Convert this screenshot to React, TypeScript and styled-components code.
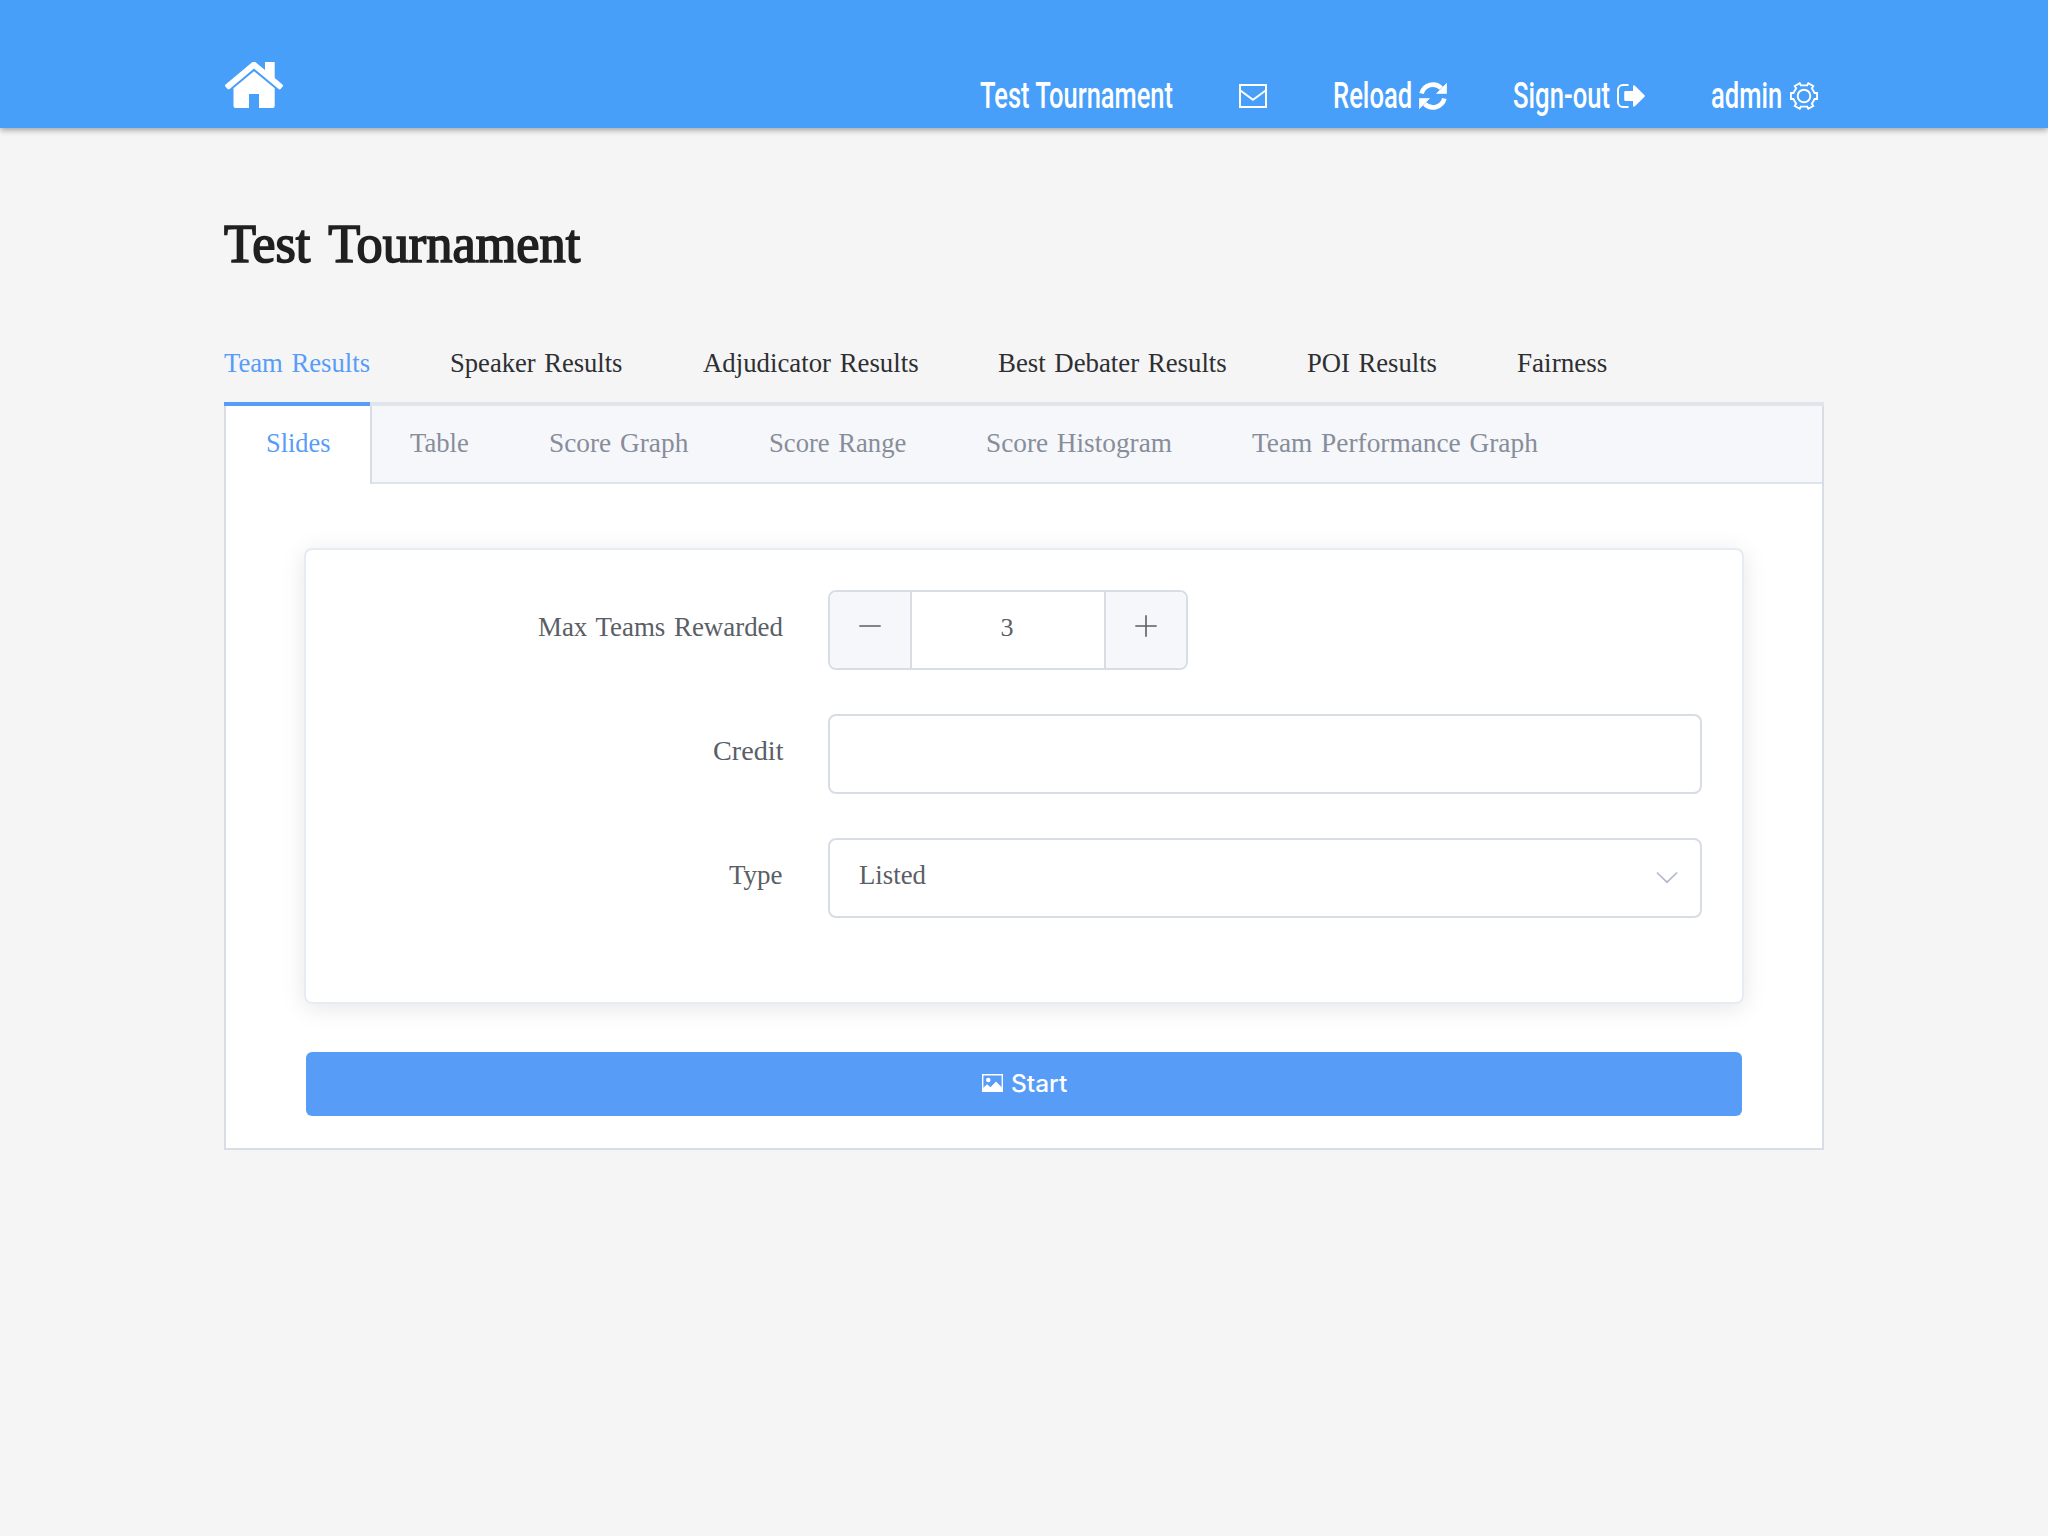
import React, { useLayoutEffect, useRef, useState } from 'react';
import styled, { createGlobalStyle, css } from 'styled-components';

const serif = `"Liberation Serif", "Times New Roman", serif`;
const condensed = `Roboto, "Liberation Sans", sans-serif`;
const line = '#d8dce5';
const primary = '#579df8';

const GlobalStyle = createGlobalStyle`
  * { box-sizing: border-box; }
  body { margin: 0; background: #f5f5f5; font-family: ${serif}; font-size: 28px; word-spacing: 2px; }
  button, input { font: inherit; }
`;

/* Text set to a fixed measure, condensed or expanded to fill it. */
const Measure = styled.span`
  display: inline-block;
  flex: none;
  white-space: nowrap;
  text-align: left;
`;
const Glyphs = styled.span`
  display: inline-block;
  transform-origin: 0 50%;
`;
function Fit({ width, children }: { width: number; children: string }) {
  const ref = useRef<HTMLSpanElement>(null);
  const [scale, setScale] = useState(1);
  useLayoutEffect(() => {
    if (ref.current) setScale(width / ref.current.offsetWidth);
  }, [width, children]);
  return (
    <Measure style={{ width }}>
      <Glyphs ref={ref} style={{ transform: `scaleX(${scale})` }}>{children}</Glyphs>
    </Measure>
  );
}

const Header = styled.header`
  height: 128px;
  padding: 0 224px;
  background: #489ff9;
  box-shadow: 0 2px 6px rgba(0, 0, 0, 0.36);
  display: flex;
  justify-content: space-between;
  color: #fff;
`;
const HomeLink = styled.a`
  padding: 62px 0 0 1px;
  svg { display: block; }
`;
const Nav = styled.nav`
  display: flex;
  padding: 70px 6px 0 0;
  gap: 66px;
`;
const NavItem = styled.a<{ $gap?: number }>`
  display: flex;
  align-items: center;
  height: 52px;
  gap: ${(p) => p.$gap ?? 8}px;
  font: 500 36px/51px ${condensed};
  word-spacing: 0;
  svg { display: block; flex: none; }
`;

const Main = styled.main`
  width: 1600px;
  margin: 0 auto;
`;
const Title = styled.h1`
  margin: 0;
  padding-top: 80px;
  height: 194px;
  font: 400 54.500px/72px ${serif};
  word-spacing: 6px;
  color: #202020;
  -webkit-text-stroke: 1.700px #202020;
`;
const PrimaryTabs = styled.div`
  display: flex;
  gap: 80px;
  height: 84px;
  border-bottom: 4px solid #dfe4ed;
`;
const PrimaryTab = styled.a<{ $active?: boolean }>`
  height: 84px;
  line-height: 81px;
  color: ${(p) => (p.$active ? primary : '#2d2f33')};
  ${(p) => p.$active && css`border-bottom: 4px solid ${primary};`}
`;
const Panel = styled.section`
  height: 744px;
  background: #fff;
  border: 2px solid ${line};
  border-top: 0;
`;
const SubTabs = styled.div`
  display: flex;
  height: 78px;
  background: #f5f7fb;
  border-bottom: 2px solid #dfe3ec;
`;
const SubTab = styled.a<{ $active?: boolean }>`
  height: 76px;
  padding: 0 40px;
  line-height: 74px;
  color: #878d99;
  ${(p) => p.$active && css`
    height: 78px;
    margin-right: -2px;
    color: ${primary};
    background: #fff;
    border-right: 2px solid ${line};
  `}
`;
const Body = styled.div`
  padding: 64px 78px 0;
`;
const Card = styled.div`
  height: 456px;
  padding: 40px;
  display: flex;
  flex-direction: column;
  gap: 44px;
  border: 2px solid #e6ebf5;
  border-radius: 8px;
  background: #fff;
  box-shadow: 0 4px 24px rgba(0, 0, 0, 0.1);
`;
const Field = styled.div`
  display: grid;
  grid-template-columns: 437px 874px;
  gap: 45px;
  height: 80px;
  color: #5a5e66;
`;
const Label = styled.label`
  text-align: right;
  line-height: 74px;
`;
const Control = styled.div`
  height: 80px;
  border: 2px solid ${line};
  border-radius: 8px;
  background: #fff;
`;
const Stepper = styled(Control)`
  display: grid;
  grid-template-columns: 82px 1fr 82px;
  width: 360px;
  overflow: hidden;
`;
const StepButton = styled.button<{ $side: 'left' | 'right' }>`
  border: 0;
  padding: 0 1px 8px 0;
  background: #f5f7fb;
  color: #5a5e66;
  display: flex;
  align-items: center;
  justify-content: center;
  border-${(p) => (p.$side === 'left' ? 'right' : 'left')}: 2px solid ${line};
`;
const StepValue = styled.div`
  padding-right: 2px;
  text-align: center;
  line-height: 71px;
  font-size: 26px;
`;
const Select = styled(Control)`
  display: flex;
  justify-content: space-between;
  padding: 0 22px 0 29px;
  line-height: 70px;
  svg { margin-top: 29px; }
`;
const StartButton = styled.button`
  display: flex;
  align-items: center;
  justify-content: center;
  gap: 8px;
  width: 1436px;
  height: 64px;
  margin: 48px 0 0 2px;
  padding: 0;
  border: 0;
  border-radius: 6px;
  background: ${primary};
  color: #fff;
  font: 500 24px/32px Inter, sans-serif;
  svg { margin-top: -2px; }
`;

const HomeIcon = () => (
  <svg width="58" height="46" viewBox="0 0 58 46" fill="#fff">
    <path d="M29 9.3 49.7 26.3V44a2 2 0 0 1-2 2H34V32H24v14H10.5a2 2 0 0 1-2-2V26.3Z" />
    <path d="M26.3.9a4 4 0 0 1 5.2 0L40 8V0h9.7v16l7.7 6.5c.7.6.8 1.3.3 1.9L55.6 27c-.6.6-1.3.6-2 .1L29 6.6 4.600 27c-.7.5-1.400.5-2-.1L.3 24.400c-.5-.6-.4-1.300.3-1.900Z" />
  </svg>
);
const MailIcon = () => (
  <svg width="28" height="24" viewBox="0 0 28 24" fill="none" stroke="#fff" strokeWidth="2">
    <path d="M1 1h26v22H1ZM1 6.300l13 9.400 13-9.400" />
  </svg>
);
const ReloadIcon = () => (
  <svg width="28" height="28" viewBox="0 0 28 28">
    <path d="M2.600 11.500A11.700 11.700 0 0 1 22.300 6.200M25.400 16.500A11.700 11.700 0 0 1 5.700 21.800" fill="none" stroke="#fff" strokeWidth="4.600" />
    <path d="M27.700 1.300v10.200H17.500ZM.3 26.700V16.500H10.500Z" fill="#fff" stroke="#fff" strokeWidth=".6" strokeLinejoin="round" />
  </svg>
);
const SignOutIcon = () => (
  <svg width="28" height="24" viewBox="0 0 28 24">
    <path d="M11.500 1H6a5 5 0 0 0-5 5v12a5 5 0 0 0 5 5h5.500" fill="none" stroke="#fff" strokeWidth="2" />
    <path d="M8.500 7H16V2.500c0-1.300 1-1.600 1.900-.8l9.400 9.200a1.500 1.500 0 0 1 0 2.200l-9.400 9.200c-.9.800-1.900.5-1.900-.8V17H8.500a1.300 1.300 0 0 1-1.300-1.300V8.300A1.300 1.300 0 0 1 8.500 7Z" fill="#fff" />
  </svg>
);
const GearIcon = () => (
  <svg width="28" height="28" viewBox="0 0 28 28" fill="none" stroke="#fff" strokeWidth="1.900">
    <circle cx="14" cy="14" r="6.300" />
    <path d="M9.700 1.200 10.800 3.400h6.400l1.100-2.200 4.900 2.800-1.300 2.300 2.700 4.700h2.500v6h-2.500l-2.700 4.700 1.300 2.300-4.900 2.800-1.100-2.200h-6.400l-1.100 2.200-4.900-2.800 1.300-2.300L3.400 17H.9v-6h2.500l2.700-4.700L4.800 4Z" />
  </svg>
);
const StepIcon = ({ plus }: { plus?: boolean }) => (
  <svg width="22" height="22" viewBox="0 0 22 22" fill="none" stroke="currentColor" strokeWidth="1.600">
    <path d={plus ? 'M.3 11h21.400M11 .3v21.400' : 'M.3 11h21.400'} />
  </svg>
);
const ChevronIcon = () => (
  <svg width="22" height="16" viewBox="0 0 22 16" fill="none" stroke="#b4bccc" strokeWidth="1.700">
    <path d="M.9 3.500 11 13.200 21.100 3.500" />
  </svg>
);
const PictureIcon = () => (
  <svg width="21" height="18" viewBox="0 0 21 18">
    <path d="M.700.700h19.600v16.600H.700Z" fill="none" stroke="#fff" strokeWidth="1.400" />
    <circle cx="6.300" cy="6" r="2.300" fill="#fff" />
    <path d="M1 17v-3l4-3.800 3.500 3L14 7.500l6 6V17Z" fill="#fff" />
  </svg>
);

const primaryTabs: [string, number][] = [
  ['Team Results', 145.8],
  ['Speaker Results', 172.8],
  ['Adjudicator Results', 215.4],
  ['Best Debater Results', 228.9],
  ['POI Results', 130.3],
  ['Fairness', 90],
];
const subTabs: [string, number][] = [
  ['Slides', 64],
  ['Table', 59],
  ['Score Graph', 139.6],
  ['Score Range', 137],
  ['Score Histogram', 186],
  ['Team Performance Graph', 286],
];

export default function App() {
  return (
    <>
      <GlobalStyle />
      <Header>
        <HomeLink><HomeIcon /></HomeLink>
        <Nav>
          <NavItem><Fit width={193}>Test Tournament</Fit></NavItem>
          <NavItem><MailIcon /></NavItem>
          <NavItem $gap={7}><Fit width={79}>Reload</Fit><ReloadIcon /></NavItem>
          <NavItem $gap={7}><Fit width={97}>Sign-out</Fit><SignOutIcon /></NavItem>
          <NavItem $gap={8}><Fit width={71}>admin</Fit><GearIcon /></NavItem>
        </Nav>
      </Header>
      <Main>
        <Title><Fit width={356}>Test Tournament</Fit></Title>
        <PrimaryTabs>
          {primaryTabs.map(([name, width], i) => (
            <PrimaryTab key={name} $active={i === 0}><Fit width={width}>{name}</Fit></PrimaryTab>
          ))}
        </PrimaryTabs>
        <Panel>
          <SubTabs>
            {subTabs.map(([name, width], i) => (
              <SubTab key={name} $active={i === 0}><Fit width={width}>{name}</Fit></SubTab>
            ))}
          </SubTabs>
          <Body>
            <Card>
              <Field>
                <Label><Fit width={245}>Max Teams Rewarded</Fit></Label>
                <Stepper>
                  <StepButton $side="left"><StepIcon /></StepButton>
                  <StepValue>3</StepValue>
                  <StepButton $side="right"><StepIcon plus /></StepButton>
                </Stepper>
              </Field>
              <Field>
                <Label><Fit width={70.5}>Credit</Fit></Label>
                <Control />
              </Field>
              <Field>
                <Label><Fit width={54}>Type</Fit></Label>
                <Select><Fit width={67}>Listed</Fit><ChevronIcon /></Select>
              </Field>
            </Card>
            <StartButton><PictureIcon /><Fit width={56}>Start</Fit></StartButton>
          </Body>
        </Panel>
      </Main>
    </>
  );
}
